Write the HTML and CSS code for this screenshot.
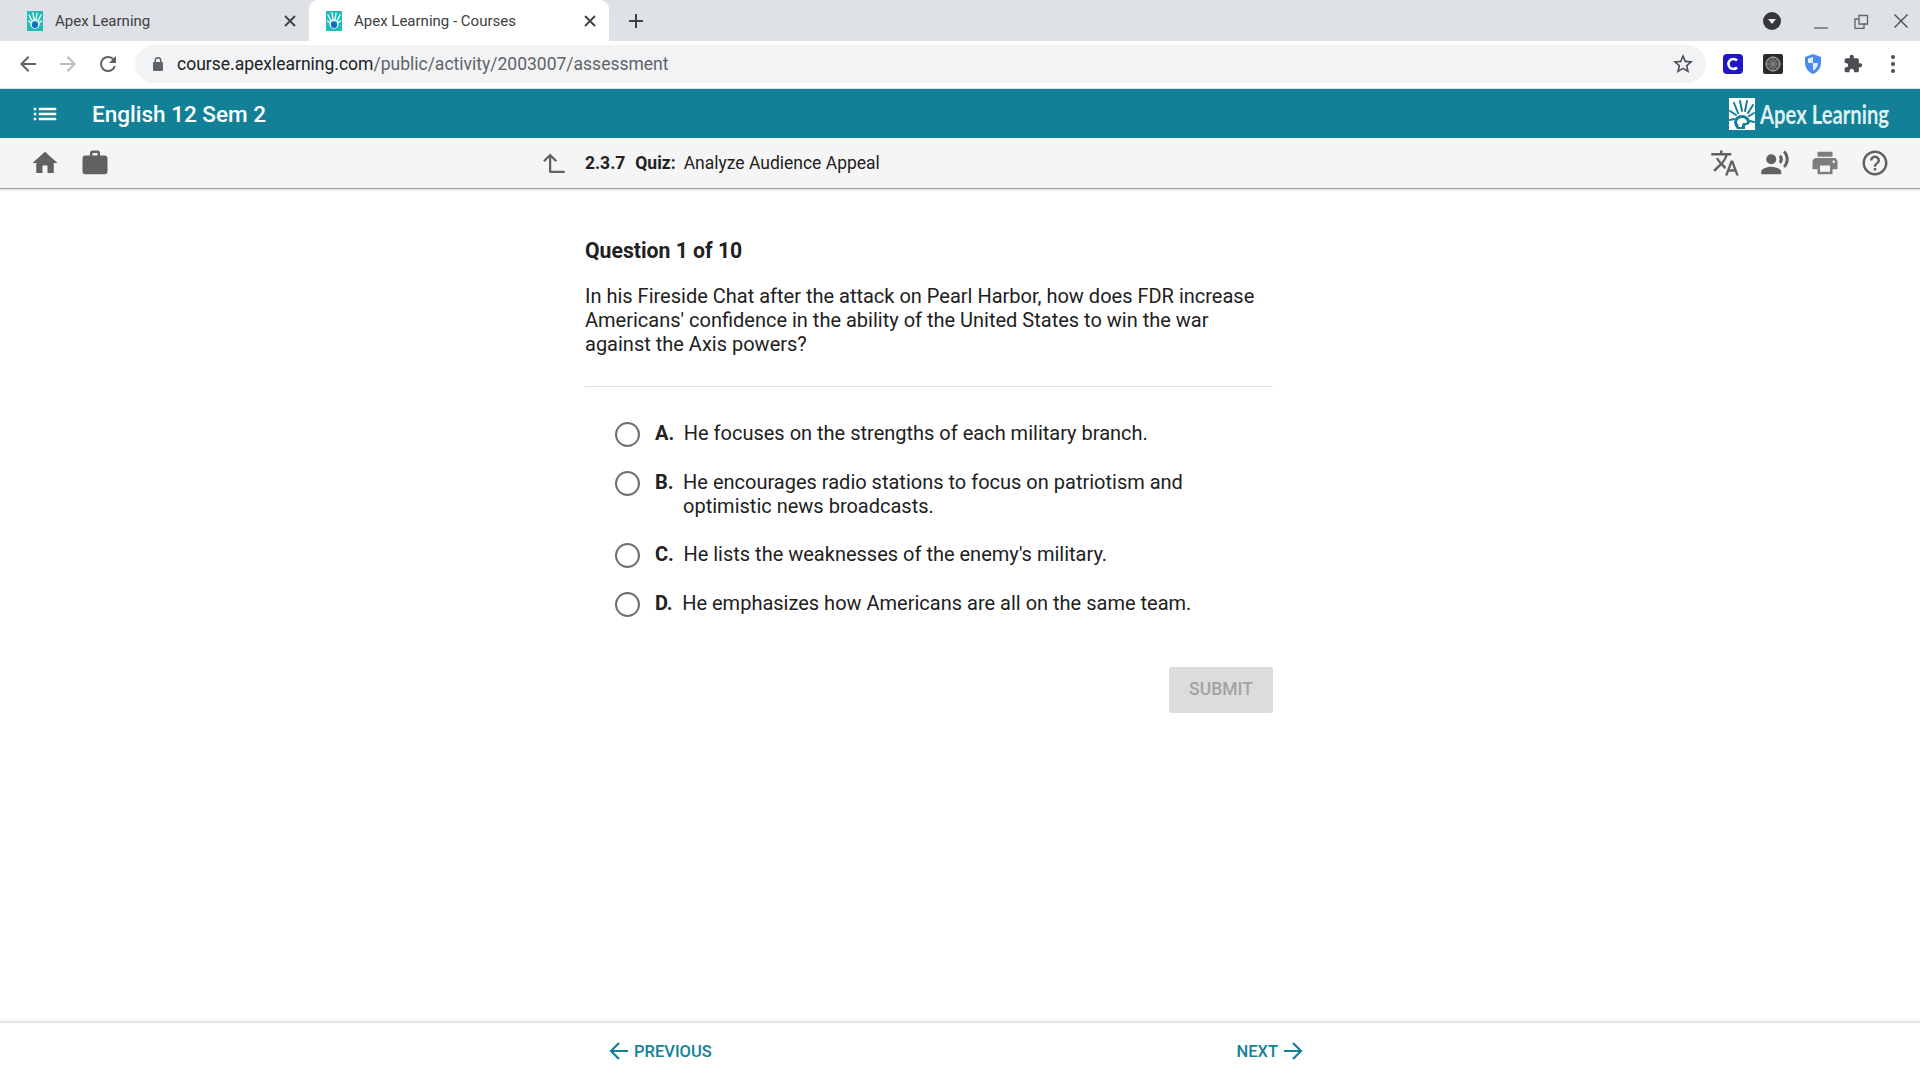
FILE: index.html
```html
<!DOCTYPE html>
<html lang="en">
<head>
<meta charset="utf-8">
<title>Apex Learning - Courses</title>
<link rel="stylesheet" href="styles.css">
</head>
<body>
<svg class="defs" width="0" height="0" aria-hidden="true">
  <symbol id="fav" viewBox="0 0 16 20">
    <rect width="16" height="20" fill="#22bdb8"/>
    <g fill="none" stroke="#fff" stroke-width="1.3" stroke-linecap="round">
      <path d="M2 4l2.5 5M6 2l1 6M10 2.5L9 8M14 4l-2.5 5M1.500 10l2.500 1.500M14.500 10L12 11.500"/>
      <circle cx="8" cy="13" r="4"/>
    </g>
    <circle cx="8" cy="14" r="3" fill="#1967c4"/>
  </symbol>
  <symbol id="x" viewBox="0 0 14 14"><path d="M2 2l10 10M12 2L2 12" fill="none" stroke="#3c4043" stroke-width="1.800"/></symbol>
</svg>

<header class="tabstrip">
  <div class="tab">
    <svg class="favicon"><use href="#fav"/></svg>
    <span class="tab-title">Apex Learning</span>
    <svg class="tab-close"><use href="#x"/></svg>
  </div>
  <div class="tab tab-active">
    <svg class="favicon"><use href="#fav"/></svg>
    <span class="tab-title">Apex Learning - Courses</span>
    <svg class="tab-close"><use href="#x"/></svg>
  </div>
  <svg class="newtab" viewBox="0 0 16 16"><path d="M8 1v14M1 8h14" stroke="#3c4043" stroke-width="2"/></svg>
  <div class="winctl">
    <svg class="profile" viewBox="0 0 18 18"><circle cx="9" cy="9" r="9" fill="#35373a"/><path d="M5 7h8l-4 5z" fill="#e8eaed"/></svg>
    <svg class="winbtn" viewBox="0 0 16 16"><path d="M1 15h14" stroke="#5f6368" stroke-width="1.300"/></svg>
    <svg class="winbtn" viewBox="0 0 16 16"><path d="M6 2.500h8.500V11H6zM6 6H2v9.500h9V11" fill="none" stroke="#5f6368" stroke-width="1.300"/></svg>
    <svg class="winbtn" viewBox="0 0 16 16"><path d="M1.500 1.500l13 13M14.500 1.500l-13 13" stroke="#4a4d51" stroke-width="1.400"/></svg>
  </div>
</header>

<nav class="toolbar">
  <div class="navbtns">
    <svg class="navicon" viewBox="0 0 24 24"><path d="M20 11H7.830l5.590-5.590L12 4l-8 8 8 8 1.410-1.410L7.830 13H20z" fill="#5f6368"/></svg>
    <svg class="navicon" viewBox="0 0 24 24"><path d="M12 4l-1.410 1.410L16.170 11H4v2h12.170l-5.580 5.590L12 20l8-8z" fill="#b9bcc0"/></svg>
    <svg class="navicon" viewBox="0 0 24 24"><path d="M17.650 6.350A7.960 7.960 0 0 0 12 4a8 8 0 1 0 7.730 10h-2.080A6 6 0 1 1 12 6c1.660 0 3.140.69 4.220 1.780L13 11h7V4z" fill="#5f6368"/></svg>
  </div>
  <div class="omnibox">
    <svg class="lock" viewBox="0 0 12 14"><path d="M10 5H9.500V3.500a3.500 3.500 0 0 0-7 0V5H2a1 1 0 0 0-1 1v7a1 1 0 0 0 1 1h8a1 1 0 0 0 1-1V6a1 1 0 0 0-1-1zM4 5V3.500a2 2 0 0 1 4 0V5z" fill="#5f6368"/></svg>
    <span class="url"><span class="url-host">course.apexlearning.com</span>/public/activity/2003007/assessment</span>
    <svg class="star" viewBox="0 0 24 24"><path d="M22 9.240l-7.190-.620L12 2 9.190 8.630 2 9.240l5.460 4.730L5.820 21 12 17.270 18.180 21l-1.630-7.030L22 9.240zM12 15.400l-3.760 2.270 1-4.280-3.320-2.880 4.380-.380L12 6.100l1.710 4.040 4.380.380-3.320 2.880 1 4.280L12 15.400z" fill="#4a4d51"/></svg>
  </div>
  <div class="exts">
    <svg class="ext" viewBox="0 0 20 20"><rect width="20" height="20" rx="4" fill="#1d17c8"/><path d="M14 6.500A5 5 0 1 0 14 13.500" fill="none" stroke="#fff" stroke-width="2.600"/></svg>
    <svg class="ext" viewBox="0 0 20 20"><rect width="20" height="20" rx="2" fill="#2c2c2c"/><circle cx="10" cy="10" r="7" fill="#555" stroke="#bbb"/><path d="M4 10h12M10 4v12M6 6l8 8M14 6l-8 8" stroke="#999" stroke-width=".7"/></svg>
    <svg class="ext" viewBox="0 0 20 20"><path d="M10 0l8 3v6c0 5-3.500 9-8 11-4.500-2-8-6-8-11V3z" fill="#4a8bf0"/><path d="M10 3v6H5V4.500zM10 9h5c0 3-2 6-5 8z" fill="#e3eefc"/></svg>
    <svg class="ext" viewBox="0 0 24 24"><path d="M20.500 11H19V7c0-1.100-.9-2-2-2h-4V3.500C13 2.120 11.880 1 10.500 1S8 2.120 8 3.500V5H4c-1.100 0-1.990.9-1.990 2v3.800H3.500c1.490 0 2.700 1.210 2.700 2.700s-1.210 2.700-2.700 2.700H2V20c0 1.100.9 2 2 2h3.800v-1.500c0-1.490 1.210-2.700 2.700-2.700 1.490 0 2.700 1.210 2.700 2.700V22H17c1.100 0 2-.9 2-2v-4h1.500c1.380 0 2.500-1.120 2.500-2.500S21.880 11 20.500 11z" fill="#4a4d51"/></svg>
    <svg class="ext" viewBox="0 0 20 20"><circle cx="10" cy="3" r="2" fill="#4a4d51"/><circle cx="10" cy="10" r="2" fill="#4a4d51"/><circle cx="10" cy="17" r="2" fill="#4a4d51"/></svg>
  </div>
</nav>

<div class="appbar">
  <svg class="menu" viewBox="0 0 24 24"><path d="M3 13h2v-2H3v2zm0 4h2v-2H3v2zm0-8h2V7H3v2zm4 4h14v-2H7v2zm0 4h14v-2H7v2zM7 7v2h14V7H7z" fill="#fff"/></svg>
  <span class="course">English 12 Sem 2</span>
  <div class="logo">
    <svg class="logo-mark" viewBox="0 0 26 32">
      <rect width="26" height="32" fill="#fff"/>
      <g fill="none" stroke="#128198" stroke-width="2" stroke-linecap="round">
        <path d="M5 5l4 10M11 3l2 10M18 3l-2 10M24 7l-5 8M1 13l6 4M25 15l-5 3M1 22l4-1M25 24l-4-1"/>
      </g>
      <path d="M8 31c-1-2-3-4-3-7a8 7 0 0 1 16 0c0 2-2 3-4 3-1 0-1 2-1 4z" fill="#128198"/>
      <path d="M10 29c0-2-2-3-2-5a5 4 0 0 1 10 0c0 1-2 1-3 1-2 0-2 2-2 4z" fill="#fff"/>
    </svg>
    <span class="logo-text">Apex Learning</span>
  </div>
</div>

<div class="subbar">
  <div class="subbar-left">
    <svg class="subicon" viewBox="0 0 24 24"><path d="M10 20v-6h4v6h5v-8h3L12 3 2 12h3v8z"/></svg>
    <svg class="subicon" viewBox="0 0 24 24"><path d="M20 6h-4V4c0-1.110-.89-2-2-2h-4c-1.110 0-2 .89-2 2v2H4c-1.110 0-1.990.89-1.990 2L2 19c0 1.110.89 2 2 2h16c1.110 0 2-.89 2-2V8c0-1.110-.89-2-2-2zm-6 0h-4V4h4v2z"/></svg>
    <svg class="uparrow" viewBox="0 0 24 24"><path d="M9 20V5M3.500 10L9 4.500l5.500 5.500M9 19.500h13" fill="none" stroke="#616161" stroke-width="2"/></svg>
  </div>
  <div class="crumb"><b>2.3.7</b><b>Quiz:</b><span>Analyze Audience Appeal</span></div>
  <div class="subbar-right">
    <svg class="subicon" viewBox="0 0 24 24"><path d="M12.870 15.070l-2.540-2.510.03-.03c1.740-1.940 2.980-4.170 3.710-6.530H17V4h-7V2H8v2H1v1.990h11.170C11.500 7.920 10.440 9.750 9 11.350 8.070 10.320 7.300 9.190 6.690 8h-2c.73 1.630 1.730 3.170 2.980 4.560l-5.090 5.020L4 19l5-5 3.110 3.110.76-2.040zM18.500 10h-2L12 22h2l1.120-3h4.750L21 22h2l-4.500-12zm-2.620 7l1.620-4.330L19.120 17h-3.240z"/></svg>
    <svg class="subicon" viewBox="0 0 24 24"><circle cx="9" cy="9" r="4"/><path d="M9 15c-2.670 0-8 1.340-8 4v2h16v-2c0-2.660-5.330-4-8-4zm7.760-9.640l-1.680 1.690c.84 1.180.84 2.710 0 3.890l1.680 1.690c2.020-2.020 2.020-5.070 0-7.270zM20.070 2l-1.630 1.630c2.770 3.020 2.770 7.560 0 10.740L20.070 16c3.900-3.890 3.910-9.950 0-14z"/></svg>
    <svg class="subicon print" viewBox="0 0 24 24"><path d="M19 8H5c-1.660 0-3 1.340-3 3v6h4v4h12v-4h4v-6c0-1.660-1.340-3-3-3zm-3 11H8v-5h8v5zm3-7c-.55 0-1-.45-1-1s.45-1 1-1 1 .45 1 1-.45 1-1 1zm-1-9H6v4h12V3z"/></svg>
    <svg class="subicon" viewBox="0 0 24 24"><path d="M11 18h2v-2h-2v2zm1-16C6.480 2 2 6.480 2 12s4.480 10 10 10 10-4.480 10-10S17.520 2 12 2zm0 18c-4.410 0-8-3.590-8-8s3.590-8 8-8 8 3.590 8 8-3.590 8-8 8zm0-14c-2.210 0-4 1.790-4 4h2c0-1.100.9-2 2-2s2 .9 2 2c0 2-3 1.750-3 5h2c0-2.250 3-2.500 3-5 0-2.210-1.790-4-4-4z"/></svg>
  </div>
</div>

<main class="quiz">
  <h1 class="q-num">Question 1 of 10</h1>
  <p class="q-text">In his Fireside Chat after the attack on Pearl Harbor, how does FDR increase Americans' confidence in the ability of the United States to win the war against the Axis powers?</p>
  <hr class="rule">
  <ul class="answers">
    <li class="answer"><span class="radio"></span><b class="letter">A.</b><span class="a-text">He focuses on the strengths of each military branch.</span></li>
    <li class="answer"><span class="radio"></span><b class="letter">B.</b><span class="a-text">He encourages radio stations to focus on patriotism and optimistic news broadcasts.</span></li>
    <li class="answer"><span class="radio"></span><b class="letter">C.</b><span class="a-text">He lists the weaknesses of the enemy's military.</span></li>
    <li class="answer"><span class="radio"></span><b class="letter">D.</b><span class="a-text">He emphasizes how Americans are all on the same team.</span></li>
  </ul>
  <div class="actions"><button class="submit" disabled>SUBMIT</button></div>
</main>

<footer class="pager">
  <div class="pager-link">
    <svg class="pager-arrow" viewBox="0 0 20 20"><path d="M19 10H2M10 2l-8 8 8 8" fill="none" stroke="#128198" stroke-width="2.200"/></svg>
    <span>PREVIOUS</span>
  </div>
  <div class="pager-link">
    <span>NEXT</span>
    <svg class="pager-arrow" viewBox="0 0 20 20"><path d="M1 10h17M10 2l8 8-8 8" fill="none" stroke="#128198" stroke-width="2.200"/></svg>
  </div>
</footer>
</body>
</html>
```
FILE: styles.css
```css
* { box-sizing: border-box; }
html, body { height: 100%; }
body {
  margin: 0;
  height: 1080px;
  overflow: hidden;
  display: flex;
  flex-direction: column;
  background: #fff;
  font-family: Roboto, "Liberation Sans", sans-serif;
  color: #212121;
}
.defs { display: block; height: 0; }

/* browser chrome */
.tabstrip {
  height: 41px;
  flex: none;
  display: flex;
  align-items: center;
  background: #dee1e6;
}
.tab {
  width: 299px;
  height: 41px;
  padding: 0 12px 0 27px;
  display: flex;
  align-items: center;
  border-radius: 9px 9px 0 0;
}
.tab:first-child { width: 298px; padding-right: 1px; }
.tab-active { background: #fff; width: 300px; padding-left: 17px; margin-left: 11px; }
.favicon { width: 16px; height: 20px; flex: none; }
.tab-title { margin-left: 12px; flex: 1; font-size: 15px; color: #3c4043; white-space: nowrap; }
.tab-close { width: 14px; height: 14px; flex: none; }
.newtab { width: 16px; height: 16px; margin-left: 19px; flex: none; }
.winctl {
  margin-left: auto;
  padding-right: 11px;
  display: flex;
  align-items: center;
  gap: 24px;
}
.profile { width: 18px; height: 18px; margin-right: 8px; }
.winbtn { width: 16px; height: 16px; }

.toolbar {
  height: 48px;
  flex: none;
  padding-bottom: 2px;
  display: flex;
  align-items: center;
  background: #fff;
  border-bottom: 1px solid #dee1e6;
}
.navbtns { width: 135px; padding-left: 16px; display: flex; gap: 16px; flex: none; }
.navicon { width: 24px; height: 24px; flex: none; }
.omnibox {
  width: 1571px;
  height: 38px;
  padding: 0 10px 0 17px;
  flex: none;
  display: flex;
  align-items: center;
  background: #f1f3f4;
  border-radius: 19px;
}
.lock { width: 12px; height: 14px; flex: none; }
.url { margin-left: 13px; flex: 1; font-size: 17.500px; color: #5f6368; white-space: nowrap; }
.url-host { color: #202124; }
.star { width: 24px; height: 24px; flex: none; margin-right: 1px; }
.exts { flex: 1; padding-left: 16.500px; display: flex; align-items: center; gap: 20px; }
.ext { width: 20px; height: 20px; flex: none; }

/* app header */
.appbar {
  height: 49px;
  flex: none;
  padding: 0 30px;
  display: flex;
  align-items: center;
  background: #128198;
  color: #fff;
}
.menu { width: 30px; height: 30px; flex: none; }
.course { margin-left: 32px; font-size: 22.500px; font-weight: 500; white-space: nowrap; }
.logo { margin-left: auto; display: flex; align-items: center; gap: 5px; }
.logo-mark { width: 26px; height: 32px; flex: none; }
.logo-text {
  font-family: Lato, sans-serif;
  font-size: 27px;
  font-weight: 700;
  color: #dff1f4;
  display: inline-block;
  transform: scaleX(.75);
  transform-origin: left center;
  width: 130px;
  white-space: nowrap;
}

.subbar {
  height: 51px;
  flex: none;
  display: grid;
  grid-template-columns: 585px 1fr auto;
  align-items: center;
  background: #f5f5f5;
  border-bottom: 1px solid #9e9e9e;
  box-shadow: 0 1px 2px rgba(0,0,0,.15);
}
.subbar-left { padding-left: 30px; display: flex; align-items: center; gap: 20px; }
.subicon { width: 30px; height: 30px; fill: #616161; flex: none; }
.print { fill: #7d7d7d; }
.uparrow { width: 27px; height: 27px; margin-left: auto; margin-right: 18px; flex: none; }
.crumb { display: flex; align-items: center; gap: 10px; font-size: 17.500px; }
.crumb b { font-weight: 700; }
.crumb span { margin-left: -2px; }
.subbar-right { padding-right: 30px; display: flex; gap: 20px; }

/* question */
.quiz { width: 688px; margin-left: 585px; padding-top: 49px; flex: 1; }
.q-num { margin: 0; font-size: 21.200px; line-height: 26px; font-weight: 700; }
.q-text { margin: 20px 0 0; font-size: 20px; line-height: 24px; }
.rule { margin: 30px 0 0; border: 0; border-top: 1px solid #dedede; }
.answers { list-style: none; margin: 0; padding: 33.500px 0 0 30px; display: flex; flex-direction: column; gap: 24px; }
.answer { display: flex; font-size: 20px; line-height: 24px; }
.radio {
  width: 25px;
  height: 25px;
  margin-top: 1px;
  margin-bottom: -1px;
  flex: none;
  border: 2px solid #6f6f6f;
  border-radius: 50%;
  background: #fff;
}
.letter { margin-left: 15px; margin-right: 9.500px; font-weight: 700; flex: none; }
.a-text { max-width: 520px; }
.actions { margin-top: 51px; display: flex; justify-content: flex-end; }
.submit {
  width: 104px;
  height: 46px;
  padding: 0 0 2px;
  border: 0;
  border-radius: 3px;
  background: #dcdcdc;
  color: #a3a3a3;
  font: 500 17.500px Roboto, sans-serif;
}

/* footer */
.pager {
  height: 58px;
  flex: none;
  padding: 0 617px 1px 609px;
  display: flex;
  align-items: center;
  justify-content: space-between;
  border-top: 1px solid #e0e0e0;
  box-shadow: 0 -1px 3px rgba(0,0,0,.12);
  color: #128198;
  font-size: 16.500px;
  font-weight: 500;
}
.pager-link { display: flex; align-items: center; gap: 5px; }
.pager-arrow { width: 20px; height: 20px; flex: none; }
```
